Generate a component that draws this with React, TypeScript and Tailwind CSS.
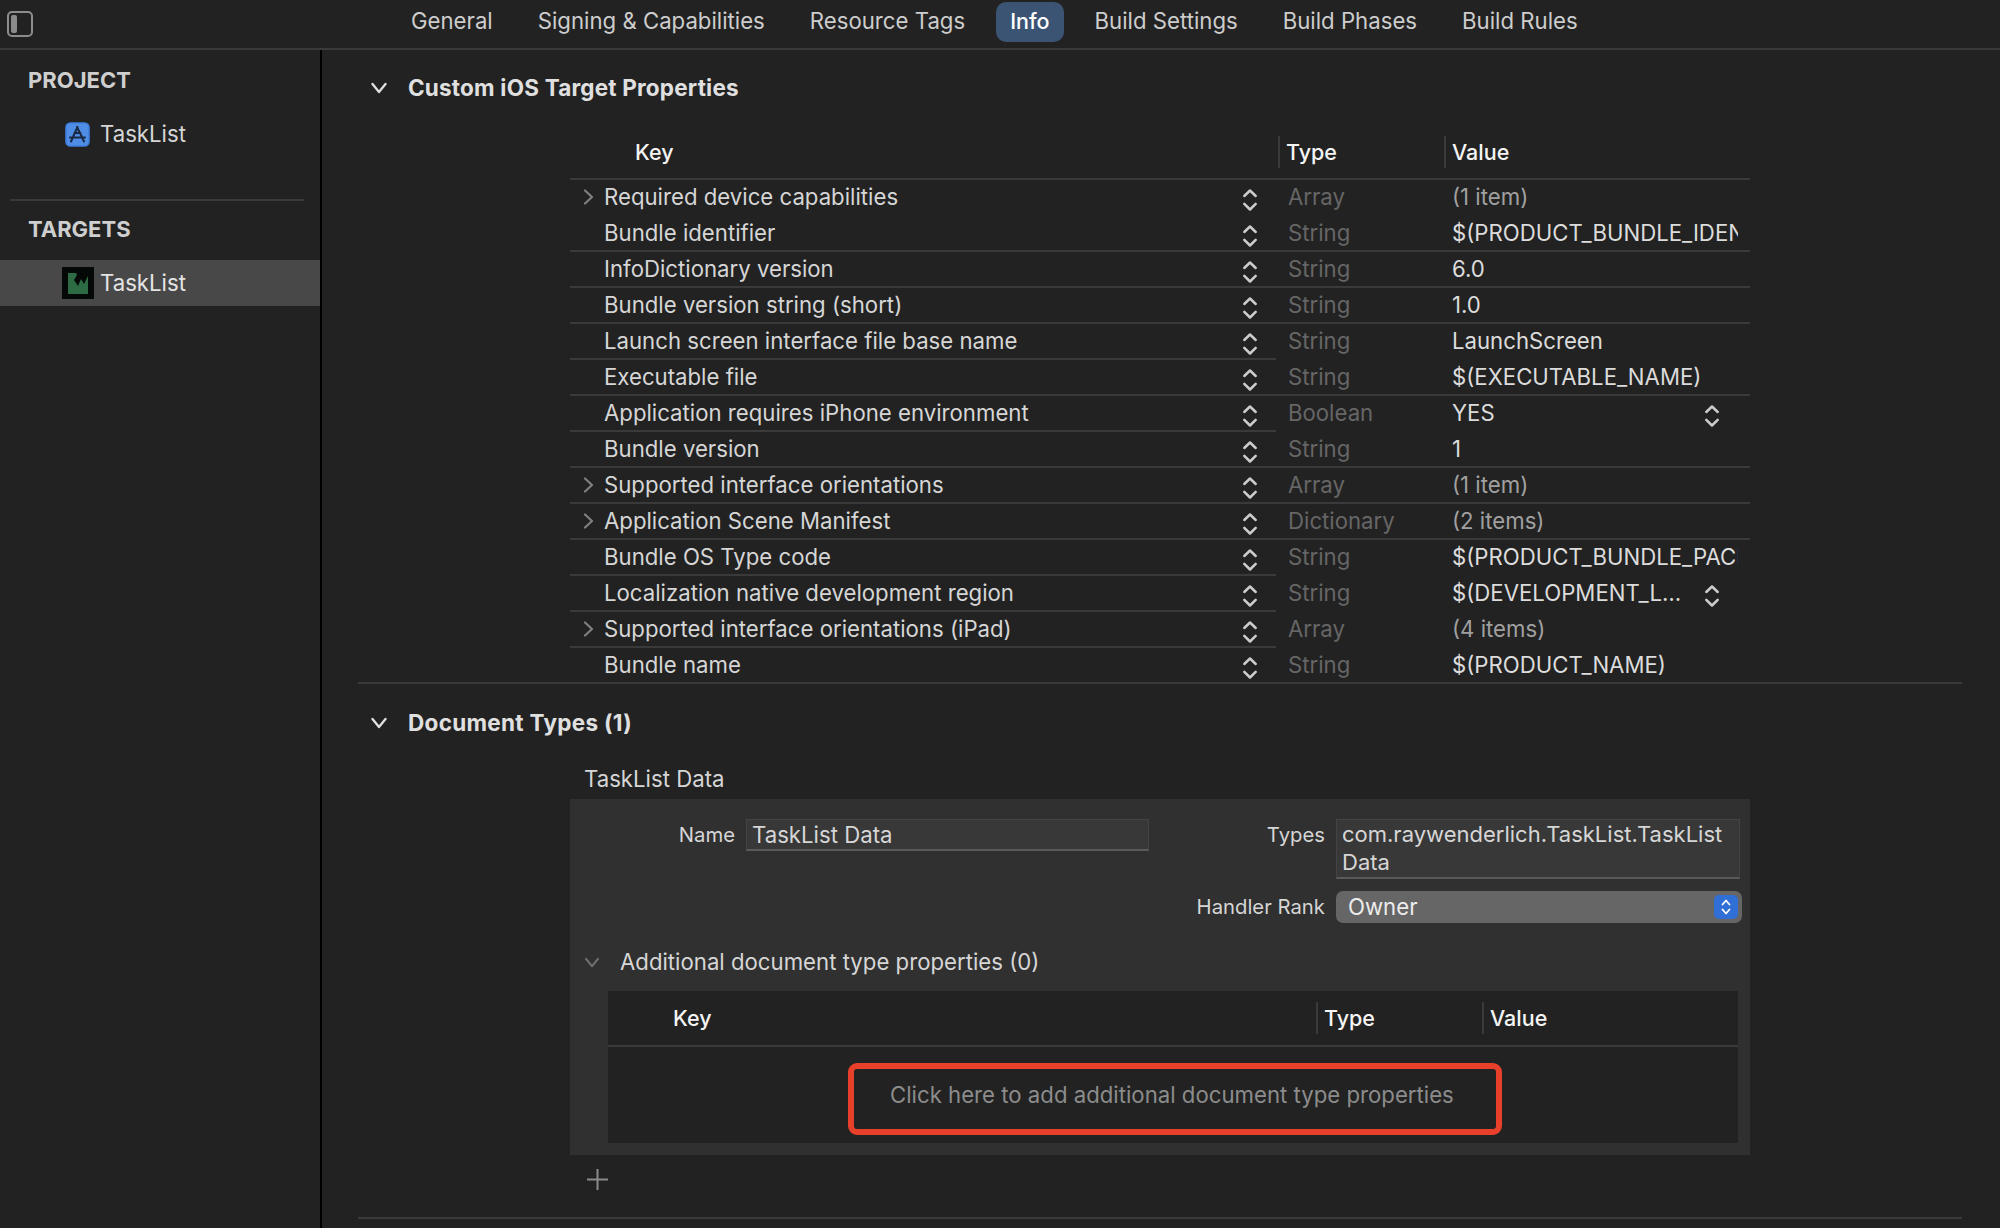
import React from 'react';

type Row = {
  key: string;
  type: string;
  value: string;
  line: 'full' | 'part' | 'none';
  expand?: boolean;
  dim?: boolean;
  pick?: boolean;
};

const tabs = ['General', 'Signing & Capabilities', 'Resource Tags', 'Info', 'Build Settings', 'Build Phases', 'Build Rules'];

const rows: Row[] = [
  { key: 'Required device capabilities', type: 'Array', value: '(1 item)', line: 'none', expand: true, dim: true },
  { key: 'Bundle identifier', type: 'String', value: '$(PRODUCT_BUNDLE_IDENTIFIER)', line: 'full' },
  { key: 'InfoDictionary version', type: 'String', value: '6.0', line: 'full' },
  { key: 'Bundle version string (short)', type: 'String', value: '1.0', line: 'full' },
  { key: 'Launch screen interface file base name', type: 'String', value: 'LaunchScreen', line: 'part' },
  { key: 'Executable file', type: 'String', value: '$(EXECUTABLE_NAME)', line: 'full' },
  { key: 'Application requires iPhone environment', type: 'Boolean', value: 'YES', line: 'part', pick: true },
  { key: 'Bundle version', type: 'String', value: '1', line: 'full' },
  { key: 'Supported interface orientations', type: 'Array', value: '(1 item)', line: 'full', expand: true, dim: true },
  { key: 'Application Scene Manifest', type: 'Dictionary', value: '(2 items)', line: 'full', expand: true, dim: true },
  { key: 'Bundle OS Type code', type: 'String', value: '$(PRODUCT_BUNDLE_PACKAGE_TYPE)', line: 'part' },
  { key: 'Localization native development region', type: 'String', value: '$(DEVELOPMENT_L…', line: 'part', pick: true },
  { key: 'Supported interface orientations (iPad)', type: 'Array', value: '(4 items)', line: 'part', expand: true, dim: true },
  { key: 'Bundle name', type: 'String', value: '$(PRODUCT_NAME)', line: 'none' },
];

function Stepper() {
  return (
    <svg width="16" height="24" viewBox="0 0 16 24" fill="none" className="shrink-0 mt-[7px] text-[#cccccc]">
      <path d="M2.3 8 8 2.5 13.7 8M2.3 15.8 8 21.5l5.7-5.7" stroke="currentColor" strokeWidth="2.5" strokeLinecap="round" strokeLinejoin="round" />
    </svg>
  );
}

function DownChevron({ className }: { className: string }) {
  return (
    <svg viewBox="0 0 16 12" fill="none" className={className}>
      <path d="M1.5 2 8 10l6.5-8" stroke="currentColor" strokeWidth="2.3" strokeLinecap="round" strokeLinejoin="round" />
    </svg>
  );
}

function AppIcon() {
  return (
    <svg width="25" height="25" viewBox="0 0 25 25" fill="none" className="shrink-0">
      <rect x="1" y="1" width="23" height="23" rx="4.5" fill="#4f8de6" stroke="#3f7fe0" strokeWidth="1.6" />
      <path d="M12.5 5 7.8 15.5 6 19.5M12 5l5.2 10.5 1.8 4M5 15.5h15M9.5 11h6" stroke="#1a2a44" strokeWidth="2" strokeLinecap="round" />
    </svg>
  );
}

function TargetIcon() {
  return (
    <svg width="32" height="32" viewBox="0 0 32 32" className="shrink-0">
      <rect width="32" height="32" fill="#040806" />
      <path d="M6 6h8l1 2-3 5 4 6 3-7 3 5 4-8v18H6Z" fill="#2c6b43" />
    </svg>
  );
}

function TableHead({ left, type, value }: { left: string; type: string; value: string }) {
  return (
    <div className="flex items-center border-b-2 border-[#3a3a3a] text-[#f4f4f4] font-medium text-[21.5px]">
      <span className={left}>Key</span>
      <div className={type}>
        <div className="w-[2px] h-[32px] bg-[#3a3a3a]" />
        <span className="ml-[6px]">Type</span>
      </div>
      <div className={value}>
        <div className="w-[2px] h-[32px] bg-[#3a3a3a]" />
        <span className="ml-[6px]">Value</span>
      </div>
    </div>
  );
}

function PropertyRow({ row, last }: { row: Row; last: boolean }) {
  const rest = row.line === 'full' ? 'border-[#3a3a3a]' : 'border-transparent';
  const keyLine = row.line === 'none' ? 'border-transparent' : 'border-[#3a3a3a]';
  return (
    <div className={last ? 'flex h-[34px]' : 'flex h-[36px]'}>
      <div className={`w-[706px] flex items-center pr-[18px] pb-px ${last ? '' : `border-b-2 ${keyLine}`}`}>
        <div className="w-[34px] flex justify-end pr-[10px]">
          {row.expand && (
            <svg width="11" height="16" viewBox="0 0 11 16" fill="none" className="text-[#808080]">
              <path d="M2 1.5 9 8l-7 6.5" stroke="currentColor" strokeWidth="2.2" strokeLinecap="round" strokeLinejoin="round" />
            </svg>
          )}
        </div>
        <span className="text-[#d6d6d6] whitespace-nowrap">{row.key}</span>
        <div className="flex-1" />
        <Stepper />
      </div>
      <div className={`w-[169px] flex items-center pl-[12px] pb-px text-[#666666] ${last ? '' : `border-b-2 ${rest}`}`}>{row.type}</div>
      <div className={`flex-1 min-w-0 flex items-center pl-[7px] pb-px ${row.pick ? 'pr-[30px]' : 'pr-[12px]'} ${last ? '' : `border-b-2 ${rest}`}`}>
        <span className={`flex-1 overflow-hidden whitespace-nowrap ${row.dim ? 'text-[#a0a0a0]' : 'text-[#dcdcdc]'}`}>{row.value}</span>
        {row.pick && <Stepper />}
      </div>
    </div>
  );
}

export default function App() {
  return (
    <div className="w-[2000px] h-[1228px] overflow-hidden bg-[#222222] font-['Inter',sans-serif] text-[22.2px] leading-[28px] flex flex-col">
      <header className="h-[50px] shrink-0 flex items-center border-b-2 border-[#3a3a3a]">
        <svg width="28" height="28" viewBox="0 0 28 28" fill="none" className="ml-[6px] shrink-0 text-[#8c8c8c]">
          <rect x="2" y="2" width="24" height="24" rx="4" stroke="currentColor" strokeWidth="2" />
          <rect x="5" y="5" width="6" height="18" rx="2" fill="currentColor" />
        </svg>
        <nav className="ml-[377px] pb-[6px] flex items-center gap-[45px] text-[#cdcdcd]">
          {tabs.map((t) =>
            t === 'Info' ? (
              <div key={t} className="relative text-white font-medium text-[21.5px]">
                <div className="absolute left-[-14px] right-[-14px] top-[-5px] h-[40px] rounded-[10px] bg-[#3c5474]" />
                <span className="relative">{t}</span>
              </div>
            ) : (
              <span key={t} className="whitespace-nowrap">{t}</span>
            ),
          )}
        </nav>
      </header>

      <div className="flex-1 min-h-0 flex">
        <aside className="w-[322px] shrink-0 border-r-2 border-black text-[#d6d6d6]">
          <div className="h-[149px]">
            <div className="pl-[28px] pt-[16px] font-bold text-[22px] text-[#cfcfcf]">PROJECT</div>
            <div className="flex items-center pl-[65px] gap-[10px] mt-[26px]">
              <AppIcon />
              <span>TaskList</span>
            </div>
          </div>
          <div className="mx-[10px] w-[294px] h-[2px] bg-[#3a3a3a]" />
          <div className="pl-[28px] pt-[14px] font-bold text-[22px] text-[#cfcfcf]">TARGETS</div>
          <div className="mt-[17px] h-[46px] bg-[#484848] flex items-center pl-[62px] gap-[6px] text-[#e4e4e4]">
            <TargetIcon />
            <span>TaskList</span>
          </div>
        </aside>

        <main className="flex-1 min-w-0 pl-[36px] pr-[38px]">
          <section className="border-b-2 border-[#3a3a3a]">
            <div className="h-[76px] flex items-center text-[#e0e0e0] font-bold text-[22.5px] tracking-[0.2px]">
              <DownChevron className="ml-[13px] w-[16px] h-[12px]" />
              <span className="ml-[21px]">Custom iOS Target Properties</span>
            </div>
            <div className="ml-[212px] w-[1180px]">
              <TableHead left="ml-[65px] w-[643px] h-[52px] flex items-center" type="w-[166px] flex items-center" value="flex-1 flex items-center" />
              {rows.map((r, i) => (
                <PropertyRow key={r.key} row={r} last={i === rows.length - 1} />
              ))}
            </div>
          </section>

          <section className="border-b-2 border-[#3a3a3a]">
            <div className="h-[77px] flex items-center text-[#e0e0e0] font-bold text-[22.5px] tracking-[0.3px]">
              <DownChevron className="ml-[13px] w-[16px] h-[12px]" />
              <span className="ml-[21px]">Document Types (1)</span>
            </div>
            <div className="ml-[226px] h-[38px] pb-[2px] flex items-center text-[#d6d6d6]">TaskList Data</div>
            <div className="ml-[212px] w-[1180px] bg-[#303030] pt-[20px] pb-[12px] text-[#d6d6d6]">
              <div className="flex items-start">
                <div className="w-[165px] h-[32px] flex items-center justify-end text-[20.3px]">Name</div>
                <div className="ml-[11px] w-[403px] h-[32px] flex items-center pl-[5px] bg-[#383838] border border-[#444444] border-b-2 border-b-[#5a5a5a]">TaskList Data</div>
                <div className="w-[176px] h-[32px] flex items-center justify-end text-[20.3px]">Types</div>
                <div className="ml-[11px] w-[404px] h-[60px] pl-[5px] bg-[#383838] border border-[#444444] border-b-2 border-b-[#5a5a5a] text-[22px] leading-[28px]">
                  com.raywenderlich.TaskList.TaskList
                  <br />
                  Data
                </div>
              </div>
              <div className="flex items-center mt-[12px]">
                <div className="ml-[579px] w-[176px] flex justify-end text-[20.3px] whitespace-nowrap">Handler Rank</div>
                <div className="ml-[11px] w-[406px] h-[32px] rounded-[7px] bg-[#666666] flex items-center pl-[12px] pr-[4px] text-[#ececec]">
                  <span className="flex-1">Owner</span>
                  <div className="w-[24px] h-[24px] rounded-[5px] bg-[#2f6fd6] flex items-center justify-center">
                    <svg width="12" height="18" viewBox="0 0 12 18" fill="none" className="text-white">
                      <path d="M2.5 6.5 6 2.5l3.5 4M2.5 11.5l3.5 4 3.5-4" stroke="currentColor" strokeWidth="1.8" strokeLinecap="round" strokeLinejoin="round" />
                    </svg>
                  </div>
                </div>
              </div>
              <div className="flex items-center h-[30px] mt-[24px]">
                <DownChevron className="ml-[14px] w-[16px] h-[11px] text-[#707070]" />
                <span className="ml-[20px]">Additional document type properties (0)</span>
              </div>
              <div className="ml-[38px] mr-[12px] mt-[14px] bg-[#222222]">
                <TableHead left="ml-[65px] w-[643px] h-[54px] flex items-center" type="w-[166px] flex items-center" value="flex-1 flex items-center" />
                <div className="h-[96px] pt-[16px] pl-[240px]">
                  <div className="w-[654px] h-[72px] box-border border-[6px] border-[#e8402a] rounded-[9px] pl-[36px] pb-[9px] flex items-center text-[#8c8c8c] whitespace-nowrap">
                    Click here to add additional document type properties
                  </div>
                </div>
              </div>
            </div>
            <div className="ml-[229px] h-[62px] pt-[14px]">
              <svg width="21" height="21" viewBox="0 0 21 21" fill="none" className="text-[#8a8a8a]">
                <path d="M10.5 0v21M0 10.5h21" stroke="currentColor" strokeWidth="2" />
              </svg>
            </div>
          </section>
        </main>
      </div>
    </div>
  );
}
